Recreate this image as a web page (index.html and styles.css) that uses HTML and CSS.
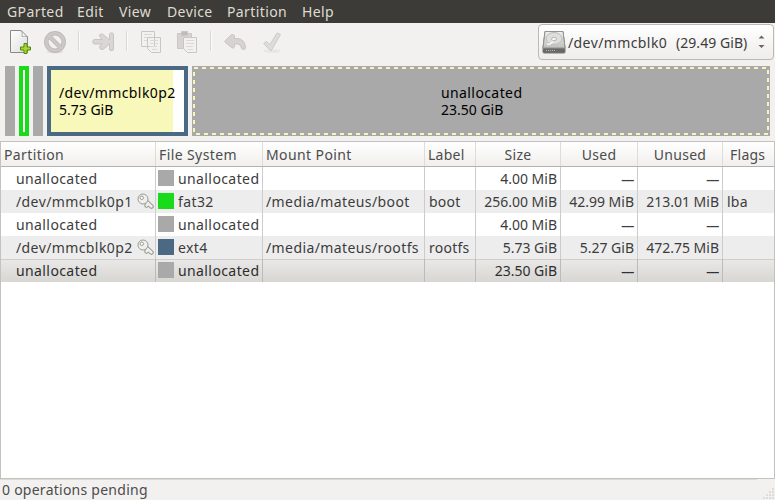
FILE: index.html
```
<!DOCTYPE html>
<html lang="en">
<head>
<meta charset="utf-8">
<title>GParted</title>
<link rel="stylesheet" href="styles.css">
</head>
<body>
<svg class="defs" width="0" height="0">
  <defs>
    <linearGradient id="paper" x1="0" y1="0" x2="1" y2="1"><stop offset="0" stop-color="#fff"/><stop offset="1" stop-color="#ddd"/></linearGradient>
    <linearGradient id="steel" x1="0" y1="0" x2="0" y2="1"><stop offset="0" stop-color="#f1f1f0"/><stop offset="1" stop-color="#bfbfbd"/></linearGradient>
    <symbol id="key" viewBox="0 0 17 17">
      <path d="M8.500 8l6 5.500M11 10.500l-1.500 2" fill="none" stroke="#9b9b96" stroke-width="4.500" stroke-linecap="round"/>
      <path d="M8.500 8l6 5.500M11 10.500l-1.500 2" fill="none" stroke="#f0f0ec" stroke-width="2.500" stroke-linecap="round"/>
      <circle cx="6" cy="6" r="5" fill="#efefec" stroke="#9b9b96"/>
      <circle cx="4.800" cy="4.800" r="1.700" fill="#fff" stroke="#9b9b96"/>
    </symbol>
  </defs>
</svg>
<div class="window">
  <nav class="menubar">
    <span class="m1">GParted</span><span class="m2">Edit</span><span class="m3">View</span><span class="m4">Device</span><span class="m5">Partition</span><span class="m6">Help</span>
  </nav>
  <div class="toolbar">
    <svg class="tools" width="300" height="38" viewBox="0 24 300 38">
      <path d="M10.500 30.500h10.500l6.500 6.500v15.500h-17z" fill="url(#paper)" stroke="#888a85"/>
      <path d="M21 30.500q2 2 1 6q3-1 5.500.5z" fill="#fff" stroke="#999b96" stroke-width=".8"/>
      <path d="M24 43.500h3v3.500h3.500v3h-3.500v3.500h-3v-3.500h-3.500v-3h3.500z" fill="#a5d631" stroke="#4e8a06"/>
      <g fill="none">
        <ellipse cx="55" cy="52" rx="9" ry="1.500" fill="#e5e3e1"/>
        <circle cx="55" cy="42" r="8.700" stroke="#bdb9b7" stroke-width="4.500"/>
        <path d="M49 36l12 12" stroke="#bdb9b7" stroke-width="4.500"/>
        <circle cx="55" cy="42" r="8.700" stroke="#cdc8c6" stroke-width="2.800"/>
        <path d="M49 36l12 12" stroke="#cdc8c6" stroke-width="2.800"/>
        <path d="M78.500 31v20M126.500 31v20M210.500 31v20" stroke="#dad7d4"/>
        <path d="M79.500 31v20M127.500 31v20M211.500 31v20" stroke="#fafafa"/>
      </g>
      <path d="M94 39.500h8l-2.500-3q-.5-3 3-2.500l7 6v-5.500q0-1.500 1.500-1.500h1q1.500 0 1.500 1.500v14.500q0 1.500-1.500 1.500h-1q-1.500 0-1.500-1.500v-5l-6.500 5.500q-3.500.5-3.500-3l2.500-2.500h-8q-3-2.500 0-4.500z" fill="#d9d6d4" stroke="#c7c3c1"/>
      <g fill="#f2f1f0" stroke="#c9c7c5">
        <path d="M141.500 31.500h13v15h-13zM147.500 37.500h13v15h-9l-4-4z"/>
        <path d="M144 34.500h8M144 37.500h3M144 40.500h3M150 40.500h8M150 43.500h8M150 46.500h7M152 49.500h5" stroke="#dbd9d7"/>
        <path d="M177.500 33.500h14v15h-14z" fill="#d6d3d1"/><path d="M181.500 31.500h6v4h-6z" fill="#bebbb9"/>
        <path d="M183.500 37.500h13v15h-9l-4-4z"/>
        <path d="M186 40.500h8M186 43.500h8M186 46.500h7M188 49.500h5" stroke="#dbd9d7"/>
      </g>
      <path d="M224.500 41.500l7-7q3 0 3 1.500v2.500h3q7 .5 8 8.500q0 2.500-2 2.500t-2.500-2.500q-.5-3-3.500-3h-3v3q-1 2-3 .5z" fill="#d6d3d1" stroke="#c8c4c2"/>
      <ellipse cx="272" cy="51" rx="9" ry="2" fill="#e9e7e5"/>
      <path d="M263.500 43.500l3-2 3.500 3 7-11.500 3.500 1.500-9.500 16.500z" fill="#dddcd9" stroke="#cccbc8"/>
    </svg>
    <div class="device">
      <svg class="disk" width="24" height="24" viewBox="0 0 24 24">
        <path d="M3 1.500h18l2 16v4.500q0 1-1 1h-20q-1 0-1-1v-4.500z" fill="#686866" stroke="#777"/>
        <path d="M3 1.500h18l2 16.500h-22z" fill="url(#steel)" stroke="#939391"/>
        <ellipse cx="12" cy="8.500" rx="8" ry="6" fill="#dededd" stroke="#bbb"/>
        <ellipse cx="12" cy="9" rx="2.500" ry="1.800" fill="#f4f4f4" stroke="#b5b5b5"/>
        <path d="M11 11q-2 4-6 3" fill="none" stroke="#f8f8f8" stroke-width="1.500"/>
        <path d="M4 20.500h10" stroke="#bbb" stroke-dasharray="1 1"/>
      </svg>
      <span class="devname">/dev/mmcblk0</span><span class="devsize">(29.49 GiB)</span>
      <svg class="arrows" width="7" height="14" viewBox="0 0 7 14"><path d="M.5 3.500L3.500.5l3 3zM.5 10l3 3 3-3z" fill="#666"/></svg>
    </div>
  </div>
  <div class="diskmap">
    <div class="seg gray"></div>
    <div class="seg green"></div>
    <div class="seg gray"></div>
    <div class="seg blue"><div>/dev/mmcblk0p2</div><div class="num">5.73 GiB</div></div>
    <div class="seg free">
      <svg class="dash" width="578" height="70"><path d="M2 2H574M576 4V68M4 68H576M2 6V68" fill="none" stroke="#f7f6b8" stroke-width="2" stroke-dasharray="4 4"/></svg>
      <div><div>unallocated</div><div class="num">23.50 GiB</div></div>
    </div>
  </div>
  <div class="list">
    <div class="row head"><span>Partition</span><span>File System</span><span>Mount Point</span><span>Label</span><span>Size</span><span>Used</span><span>Unused</span><span>Flags</span></div>
    <div class="row"><span>unallocated</span><span><i class="sw"></i>unallocated</span><span></span><span></span><span>4.00 MiB</span><span class="no">---</span><span class="no">---</span><span></span></div>
    <div class="row odd"><span><b class="dev">/dev/mmcblk0p1</b><svg class="key" width="17" height="17"><use href="#key"/></svg></span><span><i class="sw fat"></i>fat32</span><span>/media/mateus/boot</span><span>boot</span><span>256.00 MiB</span><span>42.99 MiB</span><span>213.01 MiB</span><span>lba</span></div>
    <div class="row"><span>unallocated</span><span><i class="sw"></i>unallocated</span><span></span><span></span><span>4.00 MiB</span><span class="no">---</span><span class="no">---</span><span></span></div>
    <div class="row odd"><span><b class="dev">/dev/mmcblk0p2</b><svg class="key" width="17" height="17"><use href="#key"/></svg></span><span><i class="sw ext"></i>ext4</span><span>/media/mateus/rootfs</span><span>rootfs</span><span>5.73 GiB</span><span>5.27 GiB</span><span>472.75 MiB</span><span></span></div>
    <div class="row sel"><span>unallocated</span><span><i class="sw"></i>unallocated</span><span></span><span></span><span>23.50 GiB</span><span class="no">---</span><span class="no">---</span><span></span></div>
  </div>
  <div class="status"><span>0 operations pending</span>
    <svg class="grip" width="12" height="12"><path d="M9 1h2M6 4h2M9 4h2M3 7h2M6 7h2M9 7h2M0 10h2M3 10h2M6 10h2M9 10h2" stroke="#dedbd8" stroke-width="2"/></svg>
  </div>
</div>
</body>
</html>
```

FILE: styles.css
```
* { box-sizing: border-box; }
body { margin: 0; font: 14px/17px "Noto Sans", sans-serif; letter-spacing: .4px; color: #3c3c3c; background: #f2f1f0; }
b { font-weight: normal; }
.defs { display: block; }
.window { width: 775px; height: 500px; display: flex; flex-direction: column; overflow: hidden; white-space: nowrap; }
.menubar { height: 23px; flex: none; background: #3c3b37; color: #dfdbd2; display: flex; padding-left: 7px; line-height: 23px; }
.m1 { width: 70px; } .m2 { width: 42px; } .m3 { width: 48px; } .m4 { width: 60px; } .m5 { width: 75px; }
.toolbar { height: 43px; flex: none; display: flex; justify-content: space-between; padding-top: 1px; }
.device { width: 236px; height: 36px; margin: 0 1px 0 0; border: 1px solid #bcb8b4; border-radius: 4px; background: linear-gradient(#fff, #eeedeb); display: flex; align-items: center; padding-left: 3px; }
.disk { flex: none; margin-right: 2px; }
.devname { width: 108px; flex: none; }
.devsize { width: 81px; flex: none; letter-spacing: .05px; }
.arrows { flex: none; margin-left: 1px; }
.num { letter-spacing: 0; }
.diskmap { height: 75px; flex: none; padding-left: 5px; display: flex; gap: 4px; color: #000; }
.seg { height: 70px; width: 10px; }
.gray { background: #a9a9a9; }
.green { border: 4px solid #1adb1a; background: #fff; }
.blue { width: 141px; border: 4px solid #4b6983; background: linear-gradient(to right, #f8f8ba 122px, #fff 122px); padding: 14px 0 0 8px; }
.free { width: 578px; background: #a9a9a9; display: flex; padding: 18px 0 0 249px; position: relative; }
.dash { position: absolute; left: 0; top: 0; }
.list { height: 338px; flex: none; border: 1px solid #c5c2be; background: #fff; }
.row { display: grid; grid-template-columns: 155px 107px 162px 51px 85px 77px 85px 51px; height: 23px; line-height: 23px; }
.row > span { border-right: 1px solid #ccc; padding-left: 3px; display: flex; align-items: center; height: 23px; }
.row > span:last-child { border-right: 0; }
.row > span:first-child { padding-left: 15px; }
.row > span:nth-child(2) { padding-left: 2px; }
.row > span:nth-child(n+5):nth-child(-n+7) { justify-content: flex-end; padding-right: 3px; padding-left: 0; letter-spacing: 0; }
.row > span:nth-child(n+8), .row > span:nth-child(4) { padding-left: 4px; letter-spacing: .25px; }
.head { height: 25px; background: linear-gradient(#fff, #f0efed); border-bottom: 1px solid #b4b2af; color: #4c4c4c; }
.head > span { height: 24px; border-color: #dedbd8; }
.row.head > span { padding-left: 3px; }
.row.head > span:nth-child(n+5):nth-child(-n+7) { justify-content: center; padding: 0; letter-spacing: .3px; }
.row.head > span:last-child { padding-left: 7px; }
.odd { background: #ededed; }
.sel { background: linear-gradient(#cfcdca 1px, #e9e8e6 1px, #d8d6d3); color: #2d2d2d; }
.sel > span { border-color: #bbb; }
.sw { width: 16px; height: 16px; background: #a9a9a9; margin-right: 4px; flex: none; position: relative; top: -1px; }
.fat { background: #1adb1a; }
.ext { background: #4b6983; }
.dev { width: 121px; }
.key { flex: none; }
.row > span.no:nth-child(n+5):nth-child(-n+7) { font-size: 17px; letter-spacing: -1.5px; padding-right: 4px; }
.status { flex: 1; padding: 2px 0 0 2px; display: flex; justify-content: space-between; color: #4c4c4c; letter-spacing: .25px; background: linear-gradient(#dcdad6, #dcdad6) 0 0 / 757px 1px no-repeat; }
.grip { margin-top: 7px; }
```
